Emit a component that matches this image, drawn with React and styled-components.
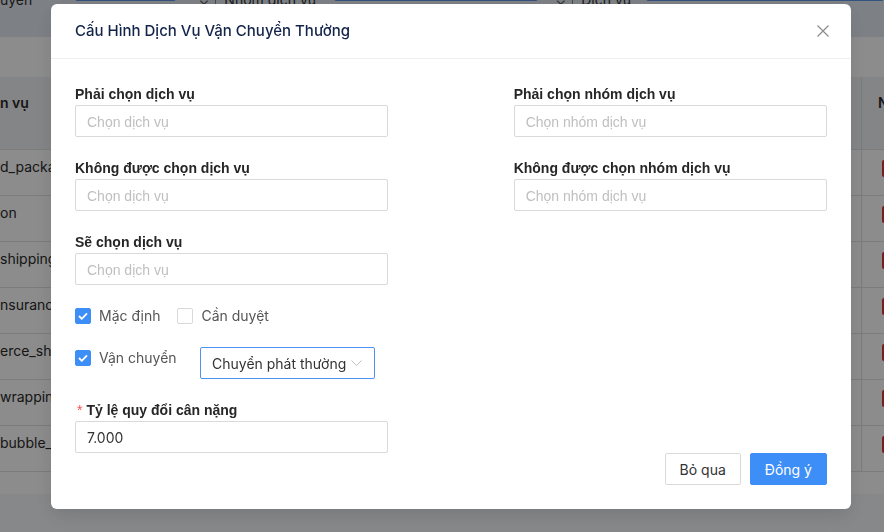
import React from "react";
import styled, { createGlobalStyle } from "styled-components";

const GlobalStyle = createGlobalStyle`
  * { box-sizing: border-box; }
  body {
    margin: 0;
    font-family: Inter, "Noto Sans", sans-serif;
    overflow: hidden;
  }
`;

/* ---------- page behind the modal ---------- */

const Page = styled.div`
  width: 884px;
  height: 532px;
  overflow: hidden;
  background: #f4f7fb;
`;

const FilterBar = styled.div`
  height: 37px;
  background: #e4eaf2;
  overflow: hidden;
`;

const FilterRow = styled.div`
  display: flex;
  align-items: flex-end;
  height: 40px;
  margin-top: -30px;
  font-size: 14px;
  color: #333;
  white-space: nowrap;
`;

const FilterLabel = styled.span`
  line-height: 20px;
`;

const FilterInput = styled.div`
  width: ${(p) => p.$w}px;
  height: 32px;
  margin-bottom: 9px;
  margin-left: ${(p) => p.$ml}px;
  border: 1px solid #5f95e7;
  border-radius: 2px;
  background: #fff;
`;

const FilterArrow = styled.span`
  margin-left: ${(p) => p.$ml}px;
  line-height: 20px;
  color: #555;
  border-right: 1px solid #888;
  padding-right: 6px;
  margin-right: 8px;
`;

const Band = styled.div`
  height: 40px;
  background: #fff;
`;

const Table = styled.div`
  background: #fff;
  padding-bottom: 22px;
`;

const TRow = styled.div`
  display: grid;
  grid-template-columns: 1fr 23px;
  height: ${(p) => (p.$head ? 73 : 46)}px;
  background: ${(p) => (p.$head ? "#f1f2f5" : "#fff")};
  border-bottom: 1px solid #e2e2e2;
`;

const TCell = styled.div`
  overflow: hidden;
  white-space: nowrap;
  font-size: 14px;
  line-height: ${(p) => (p.$head ? 22 : 20)}px;
  padding-top: ${(p) => (p.$head ? 15 : 7)}px;
  font-weight: ${(p) => (p.$head ? 600 : 400)};
  color: #2a2a2a;
`;

const TEdge = styled(TCell)`
  border-left: 1px solid #e2e2e2;
  padding-left: 16px;
`;

const Tag = styled.span`
  display: inline-block;
  margin-top: 3px;
  margin-left: 4px;
  height: 17px;
  padding: 0 6px;
  background: #d63a3a;
  color: #fff;
  font-size: 12px;
  line-height: 17px;
  border-radius: 2px;
`;

/* ---------- modal ---------- */

const Overlay = styled.div`
  position: fixed;
  inset: 0;
  background: rgba(0, 0, 0, 0.45);
  display: flex;
  justify-content: center;
  align-items: flex-start;
  padding: 4px 0 0 18px;
`;

const Modal = styled.div`
  width: 800px;
  background: #fff;
  border-radius: 6px;
  box-shadow: 0 6px 16px rgba(0, 0, 0, 0.08), 0 9px 28px rgba(0, 0, 0, 0.05);
`;

const Header = styled.div`
  display: flex;
  align-items: center;
  justify-content: space-between;
  padding: 16px 24px;
  border-bottom: 1px solid #efefef;
`;

const Title = styled.div`
  font-size: 15px;
  font-weight: 500;
  line-height: 22px;
  color: #13244a;
`;

const Close = styled.button`
  display: flex;
  align-items: center;
  justify-content: center;
  width: 12px;
  height: 22px;
  padding: 0;
  border: 0;
  background: none;
  color: #8c8c8c;
  margin-right: -2px;
`;

const Body = styled.div`
  padding: 24px 24px 24px;
`;

const FormGrid = styled.div`
  display: grid;
  grid-template-columns: 10fr 4fr 10fr;
`;

const FormItem = styled.div`
  grid-column: ${(p) => p.$col || 1};
  margin-bottom: ${(p) => (p.$last ? 0 : 20)}px;
`;

const Label = styled.label`
  display: block;
  font-family: "Liberation Sans", Arial, sans-serif;
  font-weight: 700;
  font-size: 14px;
  line-height: 22px;
  color: #262626;
`;

const Required = styled.span`
  color: #ff4d4f;
  font-weight: 400;
  margin-right: 4px;
  margin-left: 2px;
`;

const Input = styled.input`
  display: block;
  width: 100%;
  height: 32px;
  padding: 4px 11px;
  border: 1px solid #d9d9d9;
  border-radius: 2px;
  font-family: Inter, sans-serif;
  font-size: 14px;
  color: #333;
  outline: none;
  &::placeholder {
    font-family: "Liberation Sans", Arial, sans-serif;
    color: #bfbfbf;
  }
`;

const CheckRow = styled.div`
  display: flex;
  align-items: flex-start;
  gap: 17px;
  margin-bottom: 20px;
`;

const ShipRow = styled.div`
  display: grid;
  grid-template-columns: 125px 175px;
  align-items: start;
  margin-bottom: 20px;
`;

const CheckItem = styled.label`
  display: flex;
  align-items: center;
  gap: 8px;
  font-size: 14px;
  line-height: 22px;
  color: #555;
`;

const Box = styled.span`
  width: 16px;
  height: 16px;
  border-radius: 2px;
  display: flex;
  align-items: center;
  justify-content: center;
  background: ${(p) => (p.$on ? "#3e8ef7" : "#fff")};
  border: 1px solid ${(p) => (p.$on ? "#3e8ef7" : "#d9d9d9")};
`;

const Select = styled.div`
  height: 32px;
  border: 1px solid #4f93f2;
  border-radius: 2px;
  padding: 0 12px 0 11px;
  display: flex;
  align-items: center;
  justify-content: space-between;
  font-size: 14px;
  color: #333;
`;

const Footer = styled.div`
  display: flex;
  justify-content: flex-end;
  gap: 9px;
`;

const Button = styled.button`
  height: 32px;
  padding: 0 14px;
  border-radius: 2px;
  font-family: Inter, sans-serif;
  font-size: 14px;
  border: 1px solid ${(p) => (p.$primary ? "#3e8ef7" : "#d9d9d9")};
  background: ${(p) => (p.$primary ? "#3e8ef7" : "#fff")};
  color: ${(p) => (p.$primary ? "#fff" : "#333")};
`;

const Check = ({ on, children }) => (
  <CheckItem>
    <Box $on={on}>
      {on && (
        <svg width="10" height="8" viewBox="0 0 10 8">
          <path d="M1 4l2.8 2.8L9 1.4" fill="none" stroke="#fff" strokeWidth="1.8" />
        </svg>
      )}
    </Box>
    {children}
  </CheckItem>
);

const rows = [
  "d_package",
  "on",
  "shipping",
  "nsurance",
  "erce_shipping",
  "wrapping",
  "bubble_wrap",
];

const App = () => {
  return (
    <>
      <GlobalStyle />
      <Page>
        <FilterBar>
          <FilterRow>
            <FilterLabel>uyên</FilterLabel>
            <FilterInput $w={102} $ml={43} />
            <FilterArrow $ml={22}>⌄</FilterArrow>
            <FilterLabel>Nhóm dịch vụ</FilterLabel>
            <FilterInput $w={206} $ml={18} />
            <FilterArrow $ml={17}>⌄</FilterArrow>
            <FilterLabel>Dịch vụ</FilterLabel>
            <FilterInput $w={240} $ml={15} />
          </FilterRow>
        </FilterBar>
        <Band />
        <Table>
          <TRow $head>
            <TCell $head>n vụ</TCell>
            <TEdge $head>Nhóm</TEdge>
          </TRow>
          {rows.map((r) => (
            <TRow key={r}>
              <TCell>{r}</TCell>
              <TEdge>
                <Tag>Không</Tag>
              </TEdge>
            </TRow>
          ))}
        </Table>
      </Page>

      <Overlay>
        <Modal>
          <Header>
            <Title>Cấu Hình Dịch Vụ Vận Chuyển Thường</Title>
            <Close>
              <svg width="12" height="12" viewBox="0 0 12 12">
                <path d="M0.5 0.5l11 11M11.5 0.5l-11 11" stroke="currentColor" strokeWidth="1.2" />
              </svg>
            </Close>
          </Header>
          <Body>
            <FormGrid>
              <FormItem>
                <Label>Phải chọn dịch vụ</Label>
                <Input placeholder="Chọn dịch vụ" />
              </FormItem>
              <FormItem $col={3}>
                <Label>Phải chọn nhóm dịch vụ</Label>
                <Input placeholder="Chọn nhóm dịch vụ" />
              </FormItem>
              <FormItem>
                <Label>Không được chọn dịch vụ</Label>
                <Input placeholder="Chọn dịch vụ" />
              </FormItem>
              <FormItem $col={3}>
                <Label>Không được chọn nhóm dịch vụ</Label>
                <Input placeholder="Chọn nhóm dịch vụ" />
              </FormItem>
              <FormItem>
                <Label>Sẽ chọn dịch vụ</Label>
                <Input placeholder="Chọn dịch vụ" />
              </FormItem>
            </FormGrid>

            <CheckRow>
              <Check on>Mặc định</Check>
              <Check>Cần duyệt</Check>
            </CheckRow>

            <ShipRow>
              <Check on>Vận chuyển</Check>
              <Select>
                Chuyển phát thường
                <svg width="11" height="6" viewBox="0 0 11 6">
                  <path d="M0.5 0.5l5 5 5-5" fill="none" stroke="#bfbfbf" strokeWidth="1" />
                </svg>
              </Select>
            </ShipRow>

            <FormGrid>
              <FormItem $last>
                <Label>
                  <Required>*</Required>Tỷ lệ quy đổi cân nặng
                </Label>
                <Input defaultValue="7.000" />
              </FormItem>
            </FormGrid>

            <Footer>
              <Button>Bỏ qua</Button>
              <Button $primary>Đồng ý</Button>
            </Footer>
          </Body>
        </Modal>
      </Overlay>
    </>
  );
};

export default App;
